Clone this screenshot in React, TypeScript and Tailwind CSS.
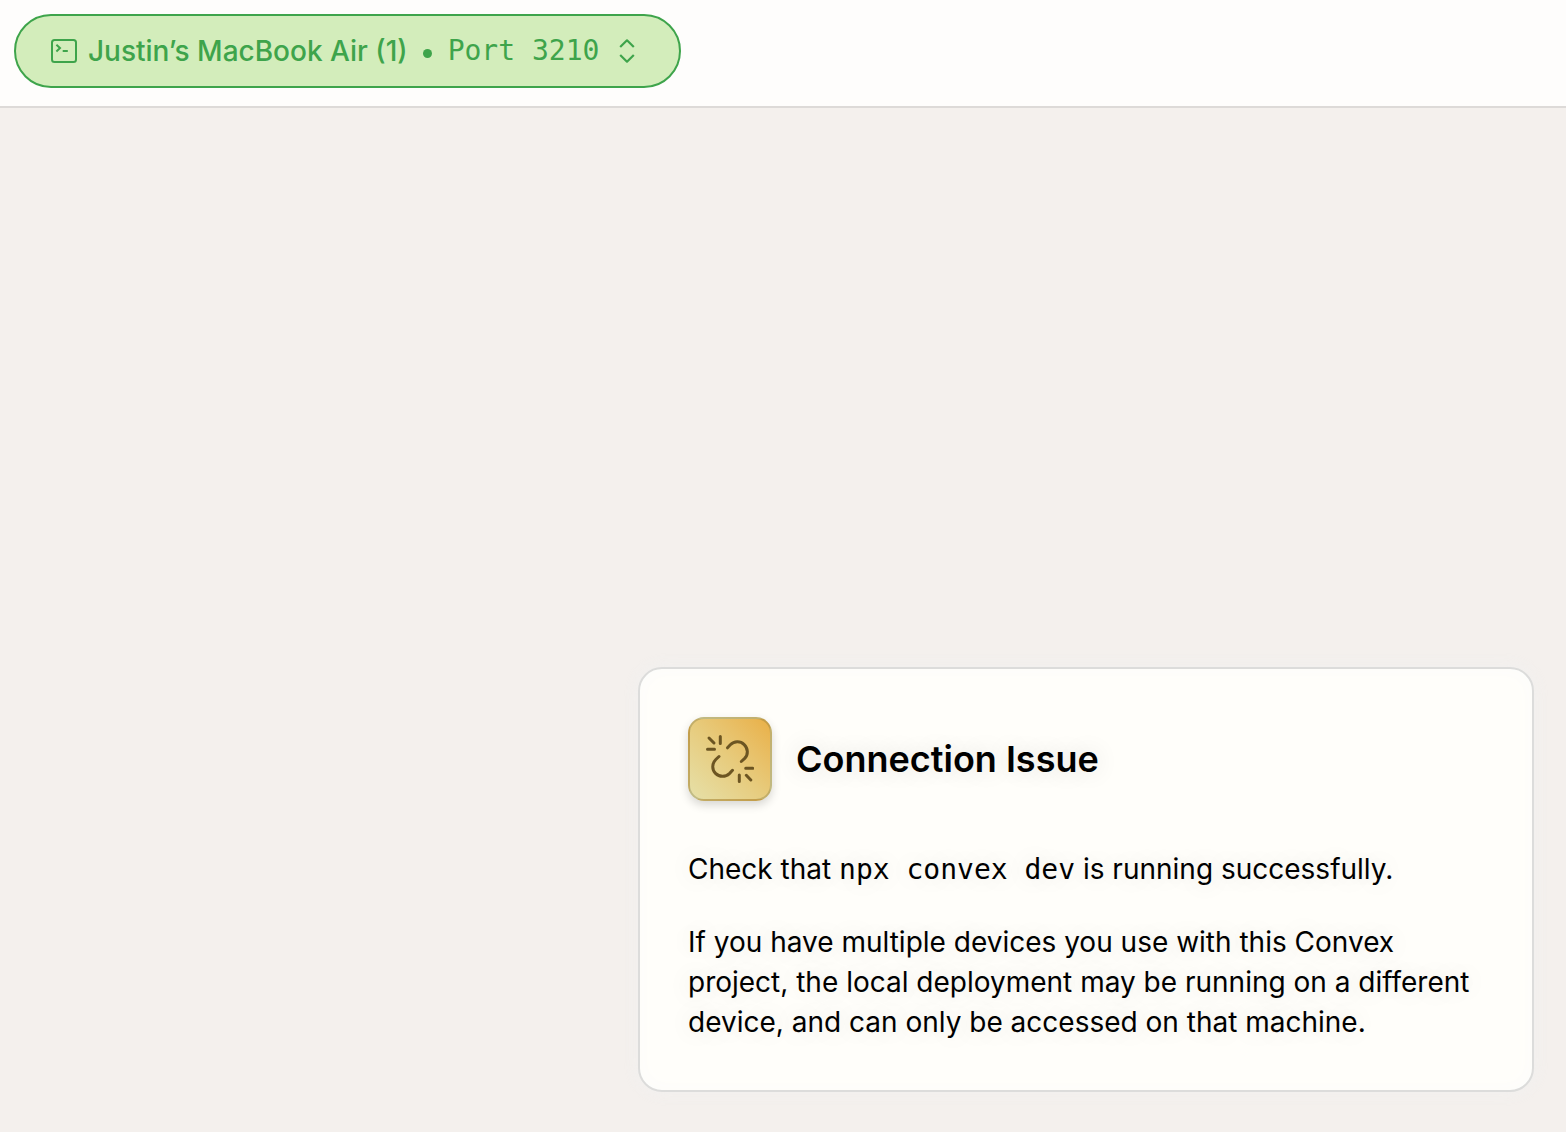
import React from 'react';

function TerminalIcon() {
  return (
    <svg className="h-6 w-[26px] shrink-0" viewBox="0 0 26 24" fill="none" stroke="currentColor" strokeWidth="2" aria-hidden="true">
      <rect x="1" y="1" width="24" height="22" rx="2.5" />
      <path d="M5.4 5.8 9 9.1 5.4 12.4" />
      <path d="M11.7 12H16.8" />
    </svg>
  );
}

function SortIcon() {
  return (
    <svg className="h-6 w-4 shrink-0" viewBox="0 0 16 24" fill="none" stroke="currentColor" strokeWidth="2.2" strokeLinejoin="round" aria-hidden="true">
      <path d="M1.2 8 8 1.3 14.8 8" />
      <path d="M1.2 16 8 22.7 14.8 16" />
    </svg>
  );
}

function BrokenLinkIcon() {
  return (
    <svg className="size-12" viewBox="0 0 48 48" fill="none" stroke="currentColor" strokeWidth="3" strokeLinecap="round" aria-hidden="true">
      <path d="M3 3 8 8M14.3 1.5V8.5M1.5 14.3H8.5" />
      <path d="M39.7 33.3H46.7M33.3 40V46.5M40.3 40.3 44.8 45" />
      <path d="M21.5 12.8 24.3 9.8C28.2 6 34.3 5.8 38.2 9.6C42.2 13.5 42.4 19.5 38.7 23.4L35.3 26.5" />
      <path d="M13 21.5 9.8 24.5C5.9 28.4 5.7 34.5 9.5 38.4C13.4 42.3 19.5 42.3 23.4 38.6L26.5 35.3" />
    </svg>
  );
}

function DeploymentButton() {
  return (
    <button
      type="button"
      className="flex h-[74px] items-center rounded-full border-2 border-[#3ea44b] bg-[#d3edbb] pr-11 pl-[35px] text-[28px] leading-10 font-medium text-[#3ea44b]"
    >
      <TerminalIcon />
      <span className="ml-[11px]">Justin’s MacBook Air (1)</span>
      <span className="mr-4 ml-[15px] mt-1 size-[9px] rounded-full bg-current" />
      <span className="font-['DejaVu_Sans_Mono',monospace] font-normal">Port 3210</span>
      <span className="ml-5">
        <SortIcon />
      </span>
    </button>
  );
}

function ConnectionIssueCard() {
  return (
    <section className="w-full max-w-[896px] rounded-3xl border-2 border-[#dcdcdb] bg-[#fffefa] p-12 text-black shadow-[0_0_16px_rgba(240,240,240,0.8),inset_0_0_20px_#fcfcfb] text-shadow-[0_0_24px_rgba(0,0,0,0.14)]">
      <div className="flex items-center gap-6">
        <div className="flex size-[84px] items-center justify-center rounded-2xl border-2 border-[#6c6a3a]/30 bg-linear-to-tr from-[#e6e0a8] via-[#e7cb7c] to-[#e9b046] text-[#6c5522] shadow-[0_4px_10px_rgba(0,0,0,0.16)]">
          <BrokenLinkIcon />
        </div>
        <h2 className="text-[36px] leading-10 font-semibold">Connection Issue</h2>
      </div>
      <div className="mt-12 space-y-8 text-[28px] leading-10">
        <p>
          Check that <code className="font-['DejaVu_Sans_Mono',monospace]">npx convex dev</code> is running
          successfully.
        </p>
        <p>
          If you have multiple devices you use with this Convex project, the local deployment may be running on a
          different device, and can only be accessed on that machine.
        </p>
      </div>
    </section>
  );
}

export default function App() {
  return (
    <div className="flex min-h-screen flex-col bg-[#f4f0ed] font-[Inter,sans-serif]">
      <header className="flex border-b-2 border-[#dddad8] bg-[#fefdfc] px-3.5 pt-3.5 pb-[18px]">
        <DeploymentButton />
      </header>
      <main className="flex flex-1 items-end justify-end px-8 pb-10">
        <ConnectionIssueCard />
      </main>
    </div>
  );
}
